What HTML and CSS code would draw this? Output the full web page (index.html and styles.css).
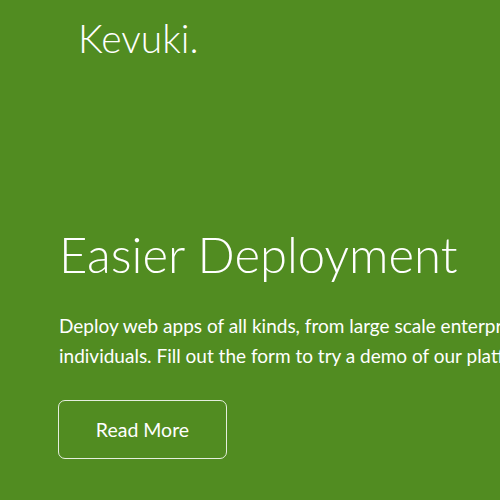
FILE: index.html
```html
<!DOCTYPE html>
<html>
<head>
<meta charset="utf-8">
<link rel="stylesheet" href="styles.css">
</head>
<body>
<header class="nav">
  <div class="logo">Kevuki.</div>
</header>
<section class="hero">
  <h1 class="title">Easier Deployment</h1>
  <p class="lead">Deploy web apps of all kinds, from large scale enterprises to individuals. Fill out the form to try a demo of our platform.</p>
  <a class="btn" href="#">Read More</a>
</section>
</body>
</html>
```
FILE: styles.css
```css
html, body {
  margin: 0;
  padding: 0;
  overflow: hidden;
  height: 100%;
}
body {
  background: #518c21;
  color: #fff;
  font-family: Lato, "Open Sans", sans-serif;
}
.nav {
  padding: 13px 0 0 78px;
}
.logo {
  font-size: 39px;
  font-weight: 300;
  line-height: 50px;
}
.hero {
  padding: 161px 0 0 59px;
  width: 540px;
}
.title {
  margin: 0;
  font-size: 49px;
  font-weight: 300;
  line-height: 60px;
}
.lead {
  margin: 27px 0 0;
  font-size: 19px;
  line-height: 30px;
}
.btn {
  display: inline-flex;
  align-items: center;
  justify-content: center;
  box-sizing: border-box;
  margin: 29px 0 0 -1px;
  width: 169px;
  height: 59px;
  border: 1px solid rgba(255,255,255,0.85);
  border-radius: 7px;
  color: #fff;
  text-decoration: none;
  font-size: 19.5px;
}
```
